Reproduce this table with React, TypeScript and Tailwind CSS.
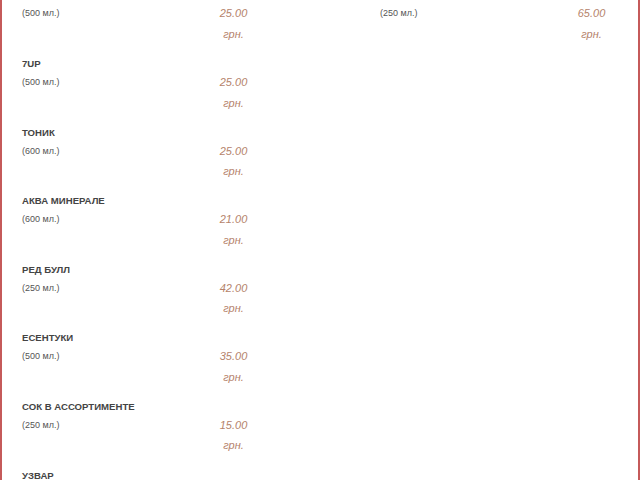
import React from "react";

type Item = { name: string; vol: string; price: string };

const left: Item[] = [
  { name: "ПЕПСИ", vol: "(500 мл.)", price: "25.00" },
  { name: "7UP", vol: "(500 мл.)", price: "25.00" },
  { name: "ТОНИК", vol: "(600 мл.)", price: "25.00" },
  { name: "АКВА МИНЕРАЛЕ", vol: "(600 мл.)", price: "21.00" },
  { name: "РЕД БУЛЛ", vol: "(250 мл.)", price: "42.00" },
  { name: "ЕСЕНТУКИ", vol: "(500 мл.)", price: "35.00" },
  { name: "СОК В АССОРТИМЕНТЕ", vol: "(250 мл.)", price: "15.00" },
  { name: "УЗВАР", vol: "(500 мл.)", price: "20.00" },
];

const right: Item[] = [
  { name: "ФРЕШ АПЕЛЬСИНОВЫЙ", vol: "(250 мл.)", price: "65.00" },
];

function Row({ item }: { item: Item }) {
  return (
    <div className="h-[68.6px] shrink-0">
      <div className="text-[9.6px] leading-[16px] font-bold text-[#444444] whitespace-nowrap">
        {item.name}
      </div>
      <div className="flex items-start">
        <div className="w-[190px] text-[9px] leading-[20.5px] text-[#555555]">{item.vol}</div>
        <div className="w-[43px] text-center italic text-[11px] leading-[20.5px] text-[#b5836b]">
          <div>{item.price}</div>
          <div>грн.</div>
        </div>
      </div>
    </div>
  );
}

export default function App() {
  return (
    <div
      className="w-[640px] h-[480px] overflow-hidden bg-white border-x-2 border-[#c55a5a]"
      style={{ fontFamily: '"Liberation Sans", Arial, sans-serif' }}
    >
      <div className="grid grid-cols-[358px_1fr] pl-[20px] -mt-[12.6px]">
        <div className="flex flex-col">
          {left.map((it, i) => (
            <Row key={i} item={it} />
          ))}
        </div>
        <div className="flex flex-col">
          {right.map((it, i) => (
            <Row key={i} item={it} />
          ))}
        </div>
      </div>
    </div>
  );
}
